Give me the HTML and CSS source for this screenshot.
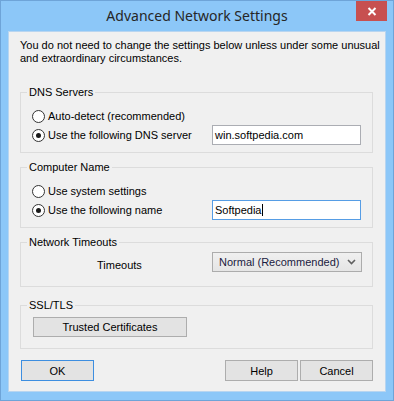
FILE: index.html
```html
<!DOCTYPE html>
<html>
<head>
<meta charset="utf-8">
<title>Advanced Network Settings</title>
<link rel="stylesheet" href="styles.css">
</head>
<body>
<div class="window">
  <div class="titlebar">
    <div class="title">Advanced Network Settings</div>
    <button class="close" aria-label="Close">
      <svg width="10" height="9" viewBox="0 0 10 9"><path d="M1.5 1 L8.5 8 M8.5 1 L1.5 8" stroke="#fff" stroke-width="2" fill="none"/></svg>
    </button>
  </div>
  <div class="client">
    <p class="intro">You do not need to change the settings below unless under some unusual<br>and extraordinary circumstances.</p>

    <div class="group group-dns">
      <span class="legend">DNS Servers</span>
      <div class="row row1"><span class="radio"></span><span>Auto-detect (recommended)</span></div>
      <div class="row row2"><span class="radio checked"></span><span>Use the following DNS server</span><div class="input">win.softpedia.com</div></div>
    </div>

    <div class="group group-name">
      <span class="legend">Computer Name</span>
      <div class="row row1"><span class="radio"></span><span>Use system settings</span></div>
      <div class="row row2"><span class="radio checked"></span><span>Use the following name</span><div class="input focused">Softpedia<span class="caret"></span></div></div>
    </div>

    <div class="group group-time">
      <span class="legend">Network Timeouts</span>
      <div class="row row-time"><span class="time-label">Timeouts</span>
        <div class="select"><span>Normal (Recommended)</span>
          <svg class="chev" width="9" height="6" viewBox="0 0 9 6"><path d="M1 1 L4.5 4.5 L8 1" stroke="#606060" stroke-width="1.6" fill="none"/></svg>
        </div>
      </div>
    </div>

    <div class="group group-ssl">
      <span class="legend">SSL/TLS</span>
      <div class="row"><button class="btn trusted">Trusted Certificates</button></div>
    </div>

    <div class="actions">
      <button class="btn ok">OK</button>
      <button class="btn help">Help</button>
      <button class="btn cancel">Cancel</button>
    </div>
  </div>
</div>
</body>
</html>
```
FILE: styles.css
```css
* { box-sizing: border-box; }
body {
  margin: 0;
  font-family: "Liberation Sans", Arial, sans-serif;
  font-size: 11px;
  color: #000;
}
.window {
  width: 394px;
  height: 401px;
  background: #8cc7f8;
  border: 1px solid #6ea4d8;
  display: flex;
  flex-direction: column;
}
.titlebar {
  height: 30px;
  display: grid;
  grid-template-columns: 1fr auto 1fr;
}
.title {
  grid-column: 2;
  font-family: "Noto Sans", sans-serif;
  font-size: 14px;
  color: #262626;
  line-height: 20px;
  margin-top: 5px;
  white-space: nowrap;
}
.close {
  grid-column: 3;
  justify-self: end;
  width: 31px;
  height: 20px;
  margin-right: 6px;
  padding: 0;
  border: 0;
  background: #c75050;
  display: flex;
  align-items: center;
  justify-content: center;
}
.client {
  margin: 0 7px;
  height: 361px;
  background: #f0f0f0;
  border: 1px solid #b8d5f0;
  padding: 0 12px 0 11px;
  display: flex;
  flex-direction: column;
}
.intro {
  margin: 7px 0 0 0;
  line-height: 13px;
  white-space: nowrap;
}
.group {
  border: 1px solid #dcdcdc;
  display: flex;
  flex-direction: column;
  padding: 0 11px;
}
.legend {
  align-self: flex-start;
  margin: -7px 0 0 -5px;
  padding: 0 2px;
  background: #f0f0f0;
  line-height: 13px;
}
.group-dns { margin-top: 27px; height: 61px; }
.group-name { margin-top: 14px; height: 61px; }
.group-time { margin-top: 14px; height: 45px; }
.group-ssl { margin-top: 18px; height: 44px; }

.row {
  display: flex;
  align-items: center;
  white-space: nowrap;
}
.row1 { height: 18px; margin-top: 8px; }
.row2 { height: 20px; }
.radio {
  flex: none;
  width: 13px;
  height: 13px;
  border: 1px solid #333;
  border-radius: 50%;
  background: #fff;
  margin-right: 3px;
  display: grid;
  place-items: center;
}
.radio.checked::after {
  content: "";
  width: 5px;
  height: 5px;
  border-radius: 50%;
  background: #1a1a1a;
}
.input {
  margin-left: auto;
  width: 149px;
  height: 20px;
  border: 1px solid #abadb3;
  background: #fff;
  padding: 0 2px;
  line-height: 18px;
  display: flex;
  align-items: center;
}
.input.focused { border-color: #569de5; }
.caret {
  display: inline-block;
  width: 1px;
  height: 12px;
  background: #000;
  margin-left: 1px;
}
.row-time { height: 20px; margin-top: 3px; }
.time-label { margin-left: 65px; padding-top: 5px; }
.select {
  margin-left: auto;
  width: 150px;
  height: 20px;
  margin-right: -1px;
  border: 1px solid #acacac;
  background: linear-gradient(#f0f0f0, #e5e5e5);
  padding: 0 5px 0 6px;
  display: flex;
  align-items: center;
  justify-content: space-between;
  color: #1a1a40;
}
.btn {
  font-family: "Liberation Sans", Arial, sans-serif;
  font-size: 11px;
  color: #000;
  background: #e3e3e3;
  border: 1px solid #adadad;
  padding: 0;
  height: 20px;
}
.trusted { margin-top: 5px; margin-left: 1px; width: 154px; }
.actions {
  margin-top: 11px;
  display: flex;
}
.actions .btn { width: 73px; height: 21px; }
.ok { margin-left: 1px; border-color: #3d8ee0; }
.help { margin-left: auto; }
.cancel { margin-left: 2px; }
```
